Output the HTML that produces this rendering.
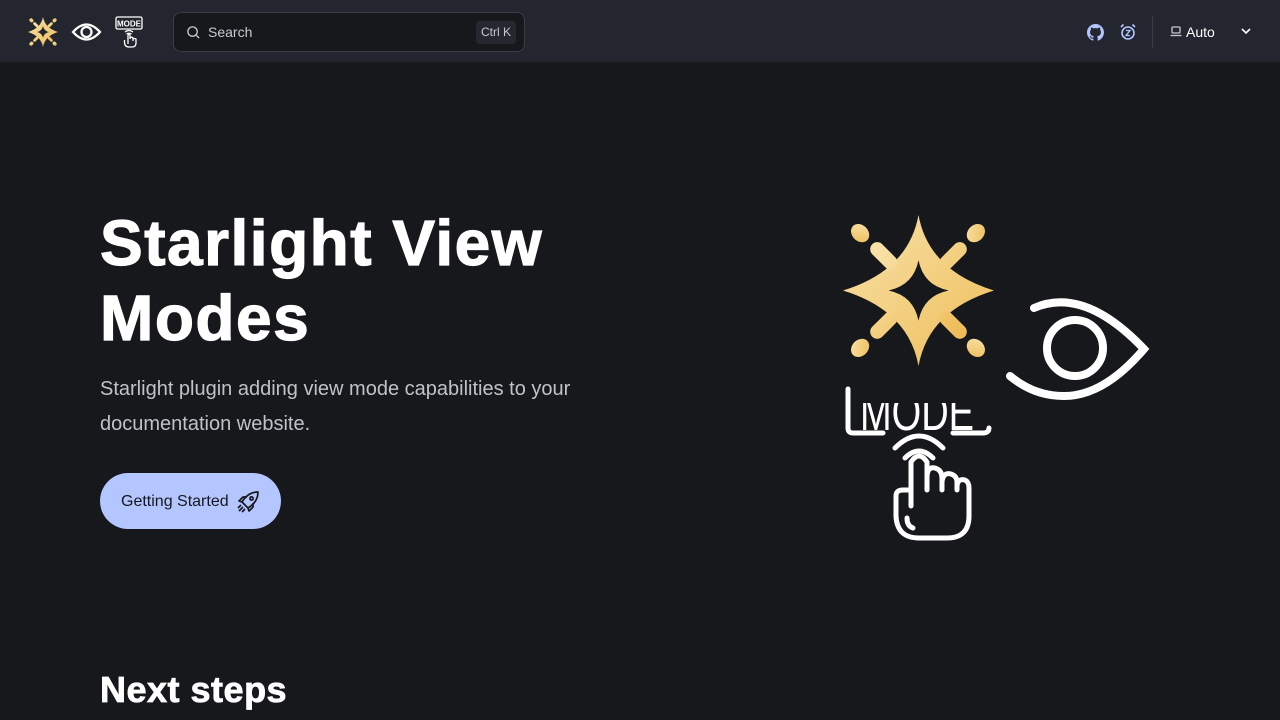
<!DOCTYPE html>
<html><head><meta charset="utf-8"><style>
*{box-sizing:border-box;margin:0;padding:0}
body{width:1280px;height:720px;overflow:hidden;background:#17181c;font-family:"Liberation Sans",sans-serif;color:#fff;position:relative}
header{position:absolute;left:0;top:0;width:1280px;height:63px;background:#23262f;border-bottom:1px solid #1a1b20}
.search{position:absolute;left:173px;top:12px;width:352px;height:40px;background:#17181c;border:1px solid #3a3d46;border-radius:8px}
.search span.t{position:absolute;left:34px;top:11px;font-size:14px;color:#c8cad0}
.kbd{position:absolute;right:8px;top:8px;height:23px;padding:0 5px;background:#26282f;border-radius:4px;font-size:12px;color:#c8cad0;line-height:23px}
h1{position:absolute;left:100px;top:206px;font-size:64px;font-weight:900;line-height:75px;letter-spacing:1.5px;-webkit-text-stroke:1.2px #fff}
.sub{position:absolute;left:100px;top:372px;font-size:20px;line-height:35px;color:#c0c2c8;width:520px}
.btn{position:absolute;left:100px;top:473px;width:181px;height:56px;border-radius:28px;background:#b4c6ff;color:#17181c;font-size:16px;line-height:57px;padding-left:21px}
h2{position:absolute;left:100px;top:669px;font-size:36px;font-weight:900;letter-spacing:0.5px;-webkit-text-stroke:0.8px #fff}
</style></head><body>
<header>
<svg style="position:absolute;left:28px;top:17px" width="30" height="30" viewBox="0 0 150 150"><defs><linearGradient id="g" x1="0" y1="0" x2="1" y2="1"><stop offset="0" stop-color="#f8e2a8"/><stop offset="1" stop-color="#eebd5a"/></linearGradient></defs><g fill="url(#g)"><path fill-rule="evenodd" d="M75 0 Q85 55 150 75 Q85 95 75 150 Q65 95 0 75 Q65 55 75 0Z M75 45 Q80 70 105 75 Q80 80 75 105 Q70 80 45 75 Q70 70 75 45Z"/><ellipse cx="17" cy="17" rx="11" ry="9" transform="rotate(45 17 17)"/><ellipse cx="133" cy="17" rx="11" ry="9" transform="rotate(-45 133 17)"/><ellipse cx="17" cy="133" rx="11" ry="9" transform="rotate(-45 17 133)"/><ellipse cx="133" cy="133" rx="11" ry="9" transform="rotate(45 133 133)"/></g><g stroke="url(#g)" stroke-width="14" stroke-linecap="round"><path d="M33 33 L45 45 M117 33 L105 45 M33 117 L45 105 M117 117 L105 105"/></g></svg>
<svg style="position:absolute;left:71px;top:21px" width="31" height="22" viewBox="0 0 31 22" fill="none" stroke="#fff" stroke-width="2.3"><path d="M2 11 Q15.5 -4 29 11 Q15.5 26 2 11Z"/><circle cx="15.5" cy="11" r="5"/></svg>
<svg style="position:absolute;left:114px;top:16px" width="30" height="32" viewBox="0 0 30 32" fill="none" stroke="#fff" stroke-width="1.3"><rect x="2" y="1" width="26" height="12" rx="1.5"/><text x="15" y="10.5" fill="#fff" stroke="none" font-size="8" font-weight="bold" text-anchor="middle" font-family="Liberation Sans">MODE</text><path d="M11 16 Q15 13 19 16 M12.5 18 Q15 16.5 17.5 18"/><path d="M14 28 V19 Q15 17.5 16 19 V23 M16 22 Q17.5 20.5 19 22 V25 M19 23 Q20.5 22 22 23 V27 Q22 31 18 31 H15 Q11 31 10.5 27 V24"/></svg>
<div class="search"><svg style="position:absolute;left:12px;top:12px" width="15" height="15" viewBox="0 0 16 16" fill="none" stroke="#c8cad0" stroke-width="1.4"><circle cx="7" cy="7" r="5"/><path d="M11 11 L14 14"/></svg><span class="t">Search</span><span class="kbd">Ctrl K</span></div>
<svg style="position:absolute;left:1087px;top:24px" width="17" height="17" viewBox="0 0 16 16"><path fill="#b4c6ff" d="M8 0C3.58 0 0 3.580 0 8c0 3.54 2.29 6.53 5.47 7.59.4.07.55-.17.55-.38 0-.19-.01-.82-.01-1.49-2.01.37-2.530-.49-2.690-.94-.09-.23-.48-.94-.82-1.130-.28-.15-.68-.52-.01-.53.63-.01 1.08.58 1.23.82.72 1.21 1.87.87 2.33.66.07-.52.28-.87.51-1.07-1.78-.2-3.64-.89-3.64-3.95 0-.87.31-1.59.82-2.15-.08-.2-.36-1.02.08-2.12 0 0 .67-.21 2.2.82.64-.18 1.32-.27 2-.27s1.36.09 2 .27c1.53-1.04 2.2-.82 2.2-.82.44 1.1.16 1.92.08 2.12.51.56.82 1.27.82 2.15 0 3.07-1.87 3.75-3.65 3.95.29.25.54.73.54 1.48 0 1.07-.01 1.930-.01 2.2 0 .21.15.46.55.38A8.01 8.01 0 0016 8c0-4.42-3.58-8-8-8z"/></svg>
<svg style="position:absolute;left:1119px;top:23px" width="18" height="18" viewBox="0 0 18 18" fill="none" stroke="#b4c6ff" stroke-width="1.6"><circle cx="9" cy="10" r="6"/><path d="M2 4 L4.5 1.5 M16 4 L13.5 1.5"/><path d="M7 7.5 H11 L7 12.5 H11" stroke-width="1.3"/></svg>
<div style="position:absolute;left:1152px;top:16px;width:1px;height:32px;background:#3a3d46"></div>
<svg style="position:absolute;left:1170px;top:26px" width="12" height="11" viewBox="0 0 12 11" fill="none" stroke="#c8cad0" stroke-width="1.3"><rect x="2" y="1" width="8" height="6" rx="1"/><path d="M0.5 9.5 H11.5"/></svg>
<span style="position:absolute;left:1186px;top:24px;font-size:14px;color:#fff">Auto</span>
<svg style="position:absolute;left:1240px;top:27px" width="12" height="8" viewBox="0 0 12 8" fill="none" stroke="#fff" stroke-width="1.6"><path d="M2 2 L6 6 L10 2"/></svg>
</header>
<h1>Starlight View<br>Modes</h1>
<div class="sub">Starlight plugin adding view mode capabilities to your documentation website.</div>
<div class="btn">Getting Started<svg style="position:absolute;left:136px;top:17px" width="24" height="24" viewBox="0 0 24 24" fill="none" stroke="#17181c" stroke-width="1.7" stroke-linejoin="round"><path d="M9 15 L6 12 Q12 2 22 2 Q22 12 12 18Z"/><circle cx="15.5" cy="8.5" r="1.6"/><path d="M6 12 L3 11 L7 7 L11 7 M12 18 L13 21 L17 17 L17 13 M7 17 L3 21 M5 15 L2 18 M9 19 L6 22"/></svg></div>
<svg style="position:absolute;left:843px;top:215px" width="151" height="151" viewBox="0 0 150 150"><defs><linearGradient id="g2" x1="0" y1="0" x2="1" y2="1"><stop offset="0" stop-color="#f8e2a8"/><stop offset="1" stop-color="#eebd5a"/></linearGradient></defs><g fill="url(#g2)"><path fill-rule="evenodd" d="M75 0 Q85 55 150 75 Q85 95 75 150 Q65 95 0 75 Q65 55 75 0Z M75 45 Q80 70 105 75 Q80 80 75 105 Q70 80 45 75 Q70 70 75 45Z"/><ellipse cx="17" cy="18" rx="10" ry="8" transform="rotate(45 17 18)"/><ellipse cx="132" cy="18" rx="10" ry="8" transform="rotate(-45 132 18)"/><ellipse cx="17" cy="132" rx="10" ry="8" transform="rotate(-45 17 132)"/><ellipse cx="132" cy="132" rx="10" ry="8" transform="rotate(45 132 132)"/></g><g stroke="url(#g2)" stroke-width="14" stroke-linecap="round"><path d="M34 34 L47 47 M116 34 L103 47 M34 116 L47 103 M116 116 L103 103"/></g></svg>
<svg style="position:absolute;left:1004px;top:296px" width="148" height="108" viewBox="0 0 148 108" fill="none" stroke="#fff" stroke-width="8" stroke-linecap="round"><path d="M30 12 Q80 -10 140 53 Q100 100 60 100 Q30 100 6 80"/><circle cx="71" cy="52" r="28"/></svg>
<svg style="position:absolute;left:843px;top:386px" width="150" height="156" viewBox="0 0 150 156"><defs><clipPath id="c"><rect x="0" y="17" width="150" height="30"/></clipPath></defs><g clip-path="url(#c)"><text x="17" y="44" textLength="114" lengthAdjust="spacingAndGlyphs" fill="#fff" font-size="52" font-family="Liberation Sans">MODE</text></g><g fill="none" stroke="#fff" stroke-width="5" stroke-linecap="round" stroke-linejoin="round"><path d="M5 3 V42 Q5 47 10 47 H40 M110 47 H140 Q146 47 146 42"/><path d="M52 62 Q76 38 100 62 M62 72 Q76 58 90 72"/><path d="M68 120 V76 Q76 64 84 76 V104 M84 92 Q84 80 92 82 Q99 84 99 92 V104 M99 96 Q100 86 108 88 Q114 90 114 96 V104 M114 100 Q115 92 122 94 Q126 96 126 102 V130 Q126 152 104 152 H76 Q54 152 53 130 V110 Q53 104 60 104 H68"/><path d="M64 132 Q64 140 70 142"/></g></svg>
<h2>Next steps</h2>
</body></html>
